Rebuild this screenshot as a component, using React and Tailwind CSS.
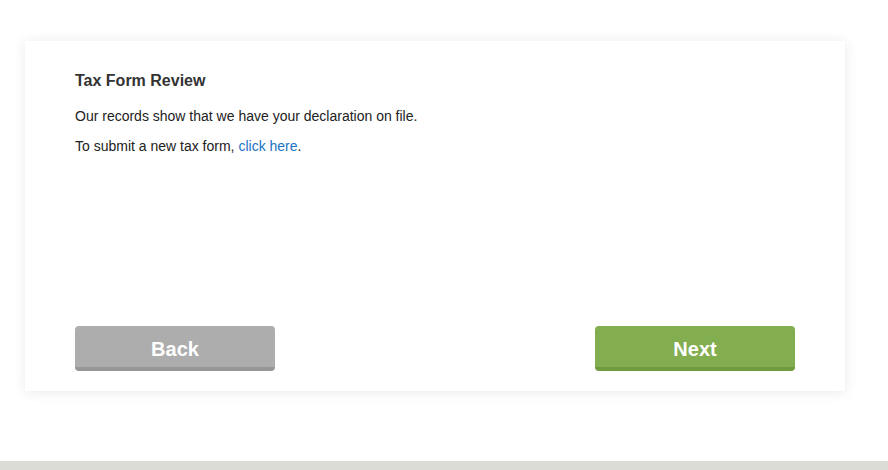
export default function App() {
  return (
    <div className="relative w-[888px] h-[470px] bg-white overflow-hidden font-['Liberation_Sans',Arial,sans-serif]">
      <div className="pt-[41px] pl-[25px]">
        <div className="w-[820px] bg-white shadow-[0_1px_12px_rgba(0,0,0,0.09)]">
          {/* Content */}
          <div className="h-[282px] pt-[31px] px-[50px]">
            <h2 className="text-[16px] leading-[18px] font-bold text-[#333]">Tax Form Review</h2>
            <p className="mt-[17px] text-[14px] leading-[18px] text-[#222]">
              Our records show that we have your declaration on file.
            </p>
            <p className="mt-[12px] text-[14px] leading-[18px] text-[#222]">
              To submit a new tax form, <a href="#" className="text-[#1a73c4]">click here</a>.
            </p>
          </div>
          {/* Footer */}
          <div className="pt-[3px] pb-[20px] px-[50px] flex justify-between">
            <button className="w-[200px] h-[45px] rounded-[4px] bg-[#adadad] border-b-4 border-[#969696] text-white text-[20px] font-bold leading-none pt-[4px]">
              Back
            </button>
            <button className="w-[200px] h-[45px] rounded-[4px] bg-[#82ae50] border-b-4 border-[#6f9a40] text-white text-[20px] font-bold leading-none pt-[4px]">
              Next
            </button>
          </div>
        </div>
      </div>
      <div className="absolute left-0 right-0 bottom-0 h-[9px] bg-[#dcdcd6]" />
    </div>
  );
}
